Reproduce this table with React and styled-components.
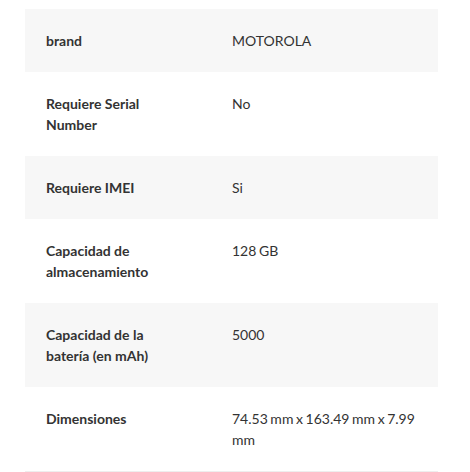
import styled, { createGlobalStyle } from 'styled-components';

const specs = [
  { label: 'brand', value: 'MOTOROLA' },
  { label: 'Requiere Serial Number', value: 'No' },
  { label: 'Requiere IMEI', value: 'Si' },
  { label: 'Capacidad de almacenamiento', value: '128 GB' },
  { label: 'Capacidad de la batería (en mAh)', value: '5000' },
  { label: 'Dimensiones', value: '74.53 mm x 163.49 mm x 7.99 mm' },
];

const GlobalStyle = createGlobalStyle`
  body {
    margin: 0;
    background: #ffffff;
    font-family: Lato, "Open Sans", sans-serif;
  }
`;

const App = () => (
  <>
    <GlobalStyle />
    <Wrapper>
      <SpecTable>
        <tbody>
          {specs.map((spec, i) => (
            <Row key={spec.label} $striped={i % 2 === 0}>
              <Label>{spec.label}</Label>
              <Value>{spec.value}</Value>
            </Row>
          ))}
        </tbody>
      </SpecTable>
    </Wrapper>
  </>
);

export default App;

const Wrapper = styled.div`
  padding: 9px 0 0 25px;
`;

const SpecTable = styled.table`
  width: 413px;
  border-collapse: collapse;
  table-layout: fixed;
  border-bottom: 1px solid #eeeeee;
`;

const Row = styled.tr`
  background: ${(p) => (p.$striped ? '#f7f7f7' : '#ffffff')};
`;

const Cell = styled.td`
  box-sizing: border-box;
  padding: 21px;
  font-size: 14px;
  line-height: 21px;
  color: #333333;
  vertical-align: top;
  text-align: left;
`;

const Label = styled(Cell)`
  width: 186px;
  font-weight: 700;
`;

const Value = styled(Cell)`
  font-weight: 400;
  word-spacing: -1px;
`;
